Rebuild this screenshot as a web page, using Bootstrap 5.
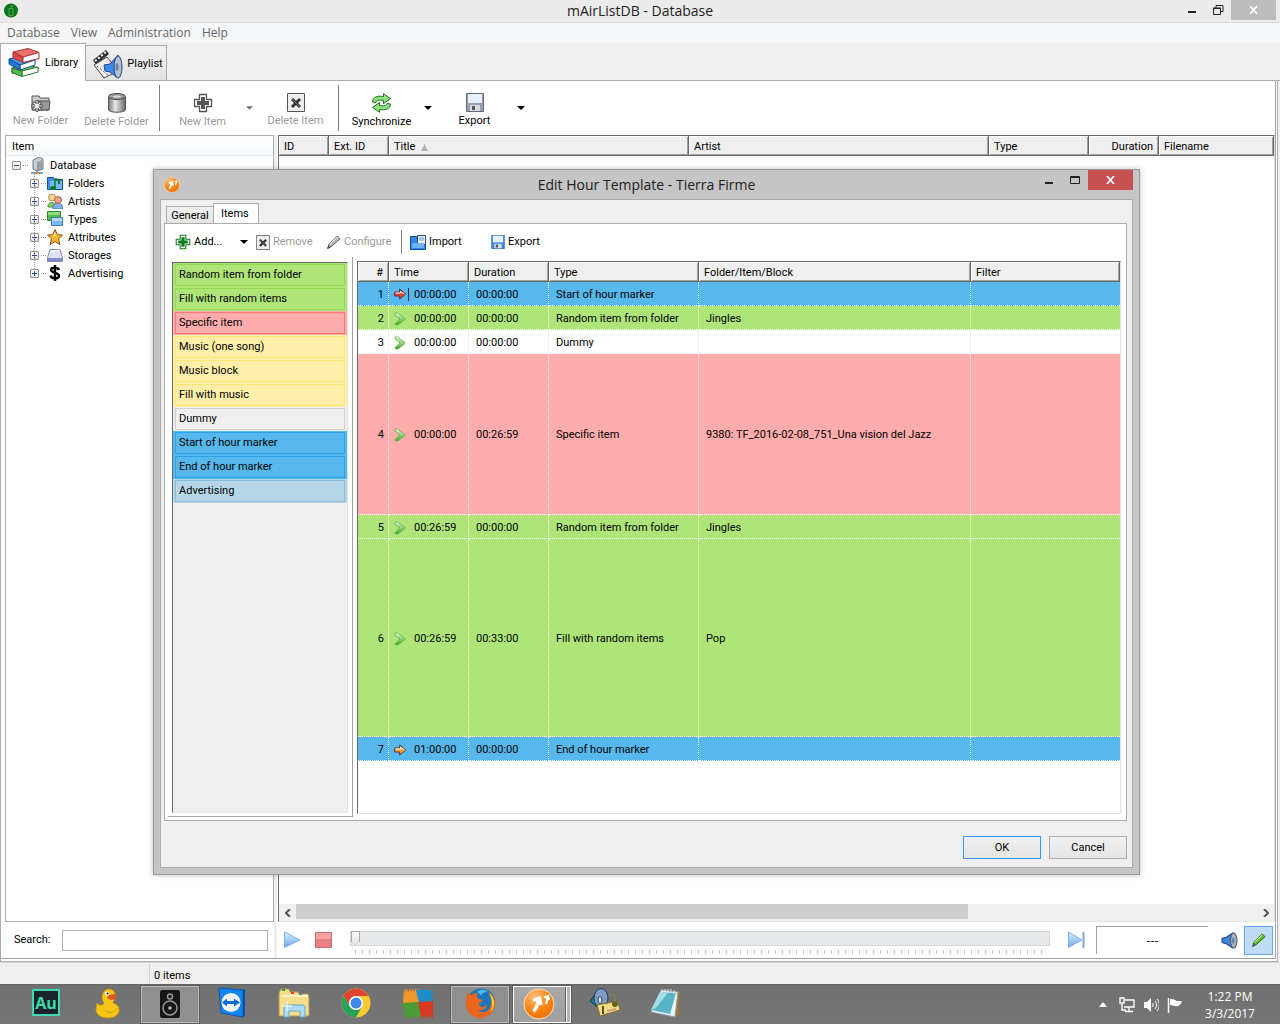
<!DOCTYPE html>
<html lang="en">
<head>
<meta charset="utf-8">
<meta name="viewport" content="width=device-width, initial-scale=1">
<title>mAirListDB - Database</title>
<link href="https://cdn.jsdelivr.net/npm/bootstrap@5.3.0/dist/css/bootstrap.min.css" rel="stylesheet">
<style>
  :root { --line:#acacac; --dark:#696969; --face:#efefef; }
  body { font:11px/14px Roboto,"Liberation Sans",sans-serif; color:#000; background:var(--face); }
  svg { display:block; flex:none; }
  button { font:inherit; color:inherit; }
  a { color:inherit; text-decoration:none; }
  .caption { display:grid; grid-template-columns:1fr auto 1fr; font:14px/22px "Open Sans","Noto Sans",sans-serif; color:#222; }
  .caption h1, .caption h2 { font:inherit; margin:0; }
  .app-caption { height:23px; background:#ebebeb; border-bottom:1px solid #d9dcdf; }
  .win-btn { border:0; background:none; padding:0; display:flex; align-items:center; justify-content:center; width:26px; height:20px; }
  .win-close { width:45px; background:#bcbcbc; color:#fff; }
  .menus { height:19px; background:#f5f6f7; font:12px/19px "Open Sans","Noto Sans",sans-serif; color:#666; padding-left:7px; gap:11px; }
  .page-tabs { height:39px; padding-top:2px; border-bottom:1px solid var(--line); align-items:flex-end; }
  .page-tab { border:1px solid var(--line); border-bottom:0; background:linear-gradient(#f1f1f1,#e3e3e3); height:35px; padding:2px 3px 0 6px; gap:4px; }
  .page-tab.on { background:#fff; height:38px; margin-bottom:-1px; padding:0 7px; gap:5px; }
  .page-tab + .page-tab { border-left:0; }
  .page-body { background:#fff; border:solid var(--line); border-width:0 1px 1px; margin-right:2px; padding:0 1px 2px 0; min-height:0; }
  .page-inner { border:solid #a0a0a0; border-width:0 1px 1px 0; }
  .bigbar { height:54px; padding-left:2px; gap:1px; }
  .big-tool { width:75px; height:44px; margin-top:8px; border:0; background:none; padding:4px 0 0; display:flex; flex-direction:column; align-items:center; gap:2px; }
  .drop { border:0; background:none; padding:0; width:16px; display:flex; justify-content:center; align-items:center; }
  .vline { width:1px; background:#808080; flex:none; }
  .bigbar .vline { margin:4px; }
  .off { color:#9a9a9a; }
  .gray svg { filter:grayscale(1); }
  .side { width:269px; margin-left:4px; border:1px solid var(--line); background:#fff; }
  .side-head { height:20px; line-height:22px; padding-left:6px; border-bottom:1px solid #e3ecf5; background:linear-gradient(#fff,#f7fafd); }
  .tree, .tree ul { list-style:none; margin:0; padding:0; }
  .tree .node { height:18px; line-height:18px; display:flex; align-items:center; }
  .tree .node b { font-weight:400; padding-top:1px; }
  .tree ul { position:relative; padding-left:20px; }
  .tree .kid::before { content:""; position:absolute; left:24px; top:0; bottom:9px; border-left:1px dotted #999; }
  .pm { width:9px; height:9px; border:1px solid #919191; border-radius:1px; position:relative; background:linear-gradient(#fff,#e4e4e4); color:#274a9c; }
  .pm svg { position:absolute; left:0; top:0; }
  .tree > li > .node > .pm { margin-left:2px; }
  .dots { width:5px; border-top:1px dotted #999; margin:0 1px 0 2px; }
  .node svg { margin-right:5px; }
  .splitter { width:3px; background:var(--face); margin:0 1px 0 0; flex:none; }
  .well { border:1px solid var(--dark); border-right-color:#e3e3e3; border-bottom-color:#e3e3e3; background:#fff; }
  .grid-tb { border-collapse:separate; border-spacing:0; table-layout:fixed; width:100%; }
  .grid-tb th { font-weight:400; height:20px; padding:2px 5px 0; line-height:17px; background:var(--face); white-space:nowrap;
    border:solid var(--dark); border-width:0 1px 1px 0; box-shadow:inset 1px 1px #fff, inset -1px -1px #a0a0a0; }
  .hscroll { height:17px; background:#f0f0f0; color:#555; }
  .hthumb { background:#cdcdcd; height:15px; width:672px; }
  .arrow-btn { width:17px; border:0; padding:0; background:none; display:flex; justify-content:center; align-items:center; }
  .footer-row { height:36px; }
  .search-lb { width:48px; flex:none; }
  .search-row { padding-left:13px; }
  .search-in { width:206px; height:21px; border:1px solid #abadb3; font:inherit; padding:0 4px; }
  .seek { -webkit-appearance:none; appearance:none; display:block; width:100%; height:15px; margin:0; background:#e7eaea; border:1px solid #d6d6d6; }
  .seek::-webkit-slider-thumb { -webkit-appearance:none; width:9px; height:15px; clip-path:polygon(0 0,100% 0,100% 75%,50% 100%,0 75%); border:1px solid #aaa; background:linear-gradient(#fafafa,#e0e0e0); }
  .ticks { height:4px; margin:4px 4px 0 5px; background:repeating-linear-gradient(90deg,#c4c4c4 0 1px,transparent 1px 7px); }
  .readout { width:112px; height:28px; border:solid #a0a0a0; border-width:1px 0 0 1px; text-align:center; line-height:28px; font-family:"DejaVu Sans",sans-serif; }
  .pen-btn { width:29px; height:29px; border:1px solid #66a7e8; background:#c0dcf5; padding:0; display:flex; align-items:center; justify-content:center; }
  .player { padding:0 2px 0 6px; }
  .btn-stop { margin:0 18px 0 14px; }
  .btn-next { margin:0 10px 0 18px; }
  .btn-vol { margin:0 6px 0 13px; }
  .status { height:22px; border-top:1px solid #d7d7d7; line-height:25px; }
  .status-l { width:150px; border-right:1px solid #d0d0d0; margin:1px 0; }

  .taskbar { height:40px; background:linear-gradient(#707070,#767676); border-top:1px solid #666; padding-left:17px; gap:4px; color:#fff; }
  .tsk { width:58px; height:37px; border:0; background:none; padding:0 0 2px; display:flex; align-items:center; justify-content:center; }
  .tsk.run { background:#8f8f8f; border:1px solid #bdbdbd; outline:1px solid #5c5c5c; outline-offset:0; margin-top:1px; }
  .tsk.cur { background:linear-gradient(#a8a8a8,#a0a0a0); border:1px solid #fff; box-shadow:inset -3px 0 #b2b2b2, inset -4px 0 #fff, inset -5px 0 #5c5c5c; padding-right:6px; }
  .clock { font:12px/17px "Open Sans","Noto Sans",sans-serif; width:78px; text-align:center; margin-right:11px; }
  .tray { gap:8px; }

  /* floating window */
  .dlg { position:absolute; left:153px; right:140px; top:169px; bottom:149px; background:#c5c5c5; border:1px solid #999; padding:0 6px 6px; box-shadow:0 0 6px rgba(0,0,0,.25); }
  .dlg .caption { height:29px; line-height:30px; }
  .dlg .win-close { background:#c75050; }
  .dlg-face { background:var(--face); border:1px solid var(--line); padding:3px 5px 8px 3px; }
  .small-tabs { height:20px; padding-left:2px; align-items:flex-end; }
  .small-tab { border:1px solid var(--line); border-bottom:0; height:17px; background:linear-gradient(#f1f1f1,#e5e5e5); padding:0 4px; line-height:17px; width:48px; white-space:nowrap; }
  .small-tab.on { background:#fff; height:21px; width:46px; margin:0 0 -1px -1px; padding:0 10px 0 7px; line-height:20px; }
  .dlg-page { background:#fff; border:1px solid var(--line); padding:6px 5px 3px 3px; }
  .smallbar { height:24px; padding-left:7px; }
  .sm-tool { border:0; background:none; padding:0; display:flex; align-items:center; gap:3px; }
  .palette-wrap { width:185px; flex:none; border:solid #a0a0a0; border-width:0 1px 1px 0; padding:5px 4px 3px 4px; margin-top:3px; }
  .palette-box { background:var(--face); }
  .table-well { margin:7px 0 3px 4px; }
  .kind { display:block; width:100%; height:24px; padding:1px 2px; border:0; text-align:left; background:var(--bg); white-space:nowrap; }
  .kind span { display:block; height:22px; line-height:20px; padding-left:3px; border:1px solid var(--bd); }
  .k-green { --bg:#afe578; --bd:#93d94e; } .k-red { --bg:#ffacac; --bd:#ff7676; } .k-yel { --bg:#ffefa8; --bd:#ffe477; }
  .k-gray { --bg:#efefef; --bd:#d0d0d0; } .k-blue { --bg:#56b8ec; --bd:#2aa4e8; } .k-pale { --bg:#b5d6e7; --bd:#86bfda; } .k-white { --bg:#fff; --bd:#eee; }
  .grid-tb td { height:24px; padding:2px 7px 0; line-height:20px; vertical-align:middle; background:var(--bg); border:dotted #fff; border-width:0 1px 1px 0; white-space:nowrap; }
  .grid-tb tr.k-white td { border-color:#e8e8e8; }
  .grid-tb td:last-child { border-right:0; }
  .grid-tb td:first-child { padding-right:4px; text-align:right; }
  .grid-tb td:nth-child(2) { padding:2px 0 0 5px; }
  .grid-tb .mark-ic { width:20px; }
  .grid-tb .tall-a td { height:161px; }
  .grid-tb .tall-b td { height:198px; }
  .push-row { padding-top:15px; gap:8px; }
  .push { width:78px; height:23px; border:1px solid var(--line); background:linear-gradient(#f0f0f0,#e5e5e5); padding:0; }
  .push.main-push { border-color:#3399ff; }
  .w-add { width:61px; } .w-rem { width:70px; } .w-conf { width:75px; } .w-imp { width:81px; }
</style>
<script src="https://cdn.jsdelivr.net/npm/bootstrap@5.3.0/dist/js/bootstrap.bundle.min.js"></script>
</head>
<body class="vh-100 d-flex flex-column overflow-hidden position-relative">
<svg width="0" height="0" class="position-absolute" aria-hidden="true">
  <defs>
    <radialGradient id="orb" cx=".35" cy=".25" r=".9"><stop offset="0" stop-color="#ffc07a"/><stop offset=".5" stop-color="#f98511"/><stop offset="1" stop-color="#e86c00"/></radialGradient>
    <linearGradient id="steel" x2="1"><stop offset="0" stop-color="#777"/><stop offset=".4" stop-color="#e8e8e8"/><stop offset="1" stop-color="#666"/></linearGradient>
    <linearGradient id="sky" x2="0" y2="1"><stop offset="0" stop-color="#e0f1ff"/><stop offset="1" stop-color="#67a9ec"/></linearGradient>
    <linearGradient id="grn" x2="0" y2="1"><stop offset="0" stop-color="#e4f8d6"/><stop offset=".5" stop-color="#8fd070"/><stop offset="1" stop-color="#41a51f"/></linearGradient>
  </defs>
  <symbol id="orange" viewBox="0 0 32 32"><circle cx="16" cy="16" r="15" fill="url(#orb)" stroke="#ffe3c4" stroke-width="1"/><path d="M10.500 23.500c2-2 4-6 4.500-11M10 12.500l6.500-2.500 1.500 7" fill="none" stroke="#fff" stroke-width="3.400"/><path d="M23 16c1-2 1.500-4 1.200-7M21 9.500l4-1.500 1 4" fill="none" stroke="#fff" stroke-width="2.200"/></symbol>
  <symbol id="plus" viewBox="0 0 20 20"><path d="M6.500 1.500h7v5h5v7h-5v5h-7v-5h-5v-7h5z" fill="#fff" stroke="currentColor" stroke-width="1.300" stroke-linejoin="round"/><path d="M8 4h4v4h4v4h-4v4H8v-4H4V8h4z" fill="currentColor"/></symbol>
  <symbol id="cross" viewBox="0 0 18 19"><path d="M.5.5h17v18H.5z" fill="#eee" stroke="#555"/><path d="M5 6l8 8M13 6l-8 8" stroke="#333" stroke-width="3"/><path d="M5 6l8 8" stroke="#777" stroke-width="1"/></symbol>
  <symbol id="tri" viewBox="0 0 8 4"><path d="M0 0h8L4 4z" fill="currentColor"/></symbol>
  <symbol id="disk" viewBox="0 0 18 19"><path d="M.5.5h17v18H.5z" fill="var(--disk,#9a9fb0)" stroke="var(--diskb,#646a7c)"/><path d="M2 1h14v9H2z" fill="#e6effb"/><path d="M4 12h10v6H4z" fill="#ddd"/><path d="M6 13h3v4H6z" fill="#556"/></symbol>
  <symbol id="horn" viewBox="0 0 16 16"><path d="M1 6l4-1 6-4v14l-6-4-4-1z" fill="#3f87e0" stroke="#1d478f"/><ellipse cx="12" cy="8" rx="3" ry="7" fill="#aeb3bd" stroke="#555a66"/><ellipse cx="11.500" cy="8" rx="1.200" ry="3" fill="#6787b8"/></symbol>
  <symbol id="pencil" viewBox="0 0 16 16"><path d="M2 14l1-4 9-9 3 3-9 8z" fill="var(--pen,#bbb)" stroke="var(--penb,#555)"/><path d="M4 10l8-8" stroke="#fff" stroke-width="1"/><path d="M1 15l1.500-4 2.500 2.500z" fill="#555"/></symbol>
  <symbol id="chev" viewBox="0 0 12 14"><path d="M1 1h2.500l7.500 5.500v1L4 13H1.500l-.5-1.500L6 7 1 3z" fill="url(#grn)" stroke="#67b04f" stroke-width=".8"/></symbol>
  <symbol id="arr" viewBox="0 0 13 12"><path d="M.7 4h5V1l6 5-6 5V8h-5z" fill="var(--ar)" stroke="#62302a"/><path d="M1.500 5h5V3.500l4 2.500" stroke="#fff" fill="none"/></symbol>
</svg>

<header class="caption app-caption">
  <div><svg width="15" height="20" viewBox="0 0 15 20" class="ms-1"><circle cx="7" cy="10.500" r="7" fill="#087814"/><path d="M5 8.500h4v7H5zM7 8.500V6h2.500" fill="none" stroke="#5f9f66"/></svg></div>
  <h1 class="pt-1 lh-1">mAirListDB - Database</h1>
  <div class="d-flex justify-content-end pe-1">
    <button class="win-btn" aria-label="Minimize"><svg width="8" height="10"><path d="M0 6h8v2H0z" fill="#222"/></svg></button>
    <button class="win-btn" aria-label="Restore"><svg width="11" height="10" viewBox="0 0 11 10"><path d="M.5 3.500h7v6h-7zM3 3V.5h7v6H8M0 3h8" fill="none" stroke="#222"/></svg></button>
    <button class="win-btn win-close" aria-label="Close"><svg width="9" height="8" viewBox="0 0 9 8"><path d="M1 0l7 8M8 0L1 8" stroke="#fff" stroke-width="1.700"/></svg></button>
  </div>
</header>
<nav class="menus d-flex"><a href="#">Database</a><a href="#">View</a><a href="#">Administration</a><a href="#">Help</a></nav>

<div class="page-tabs d-flex">
  <button class="page-tab on d-flex align-items-center">
    <svg width="32" height="29" viewBox="0 0 32 29"><path d="M4 20l14-4 13 4-17 7-10-2z" fill="#60b95a" stroke="#267a29"/><path d="M14 23l16-4v5l-16 4.500z" fill="#fff" stroke="#267a29"/><path d="M4 20v4.500l10 4V23z" fill="#55b750" stroke="#267a29"/><path d="M1 11l15-3 11 4-15 5z" fill="#4a9ce8" stroke="#15519a"/><path d="M12 17l15-5v5l-15 5z" fill="#fff" stroke="#15519a"/><path d="M1 11v5l11 6v-5z" fill="#2277cf" stroke="#15519a"/><path d="M5 4l15-3.500L31 4.500 15 9z" fill="#ec7272" stroke="#a33"/><path d="M5 4v6l10 4.500V9z" fill="#d94848" stroke="#a33"/><path d="M15 9l16-4.500v6l-16 4z" fill="#fff" stroke="#a33"/></svg>Library</button>
  <button class="page-tab d-flex align-items-center">
    <svg width="31" height="30" viewBox="0 0 31 30"><path d="M1 11L14 1l3 4L4 16z" fill="#333"/><path d="M3 12L15 2" stroke="#fff" stroke-width="2" stroke-dasharray="2 2"/><path d="M2 16l13-8 11 14-14 7z" fill="#eee" stroke="#444"/><path d="M5 17l12 10" stroke="#555" stroke-dasharray="2 2"/><path d="M12 16l6-1 8-9v23l-8-6-5-1z" fill="#3f8be6" stroke="#1d478f"/><ellipse cx="26" cy="18" rx="4" ry="11" fill="#b9bec8" stroke="#1d478f"/><ellipse cx="25" cy="18" rx="1.500" ry="4" fill="#6787b8"/></svg>Playlist</button>
</div>

<main class="page-body flex-fill d-flex flex-column">
 <div class="page-inner flex-fill d-flex flex-column">
  <div class="bigbar d-flex">
    <button class="big-tool off gray"><svg width="20" height="19" viewBox="0 0 20 19"><path d="M1 3h7l1 2h9v12H1z" fill="#ccc" stroke="#555"/><path d="M6 8h13l-1 9H5z" fill="#999" stroke="#555"/><path d="M6 7v12M0 13h12M2 9l8 8M10 9l-8 8" stroke="#333" stroke-width="2.600"/><path d="M6 7.500v11M.5 13h11M2.500 9.500l7 7M9.500 9.500l-7 7" stroke="#fff" stroke-width="1.200"/></svg>New Folder</button>
    <button class="big-tool off gray"><svg width="20" height="20" viewBox="0 0 20 20"><path d="M1.500 4v13c2 3 15 3 17 0V4z" fill="url(#steel)" stroke="#555"/><ellipse cx="10" cy="3.500" rx="8.500" ry="3" fill="#999" stroke="#444"/><ellipse cx="10" cy="3.500" rx="4" ry="1" fill="#ddd"/></svg>Delete Folder</button>
    <div class="vline"></div>
    <button class="big-tool off"><svg width="20" height="20" style="color:#555"><use href="#plus"/></svg>New Item</button>
    <button class="drop off" aria-label="New item options"><svg width="7" height="4" class="text-secondary"><use href="#tri"/></svg></button>
    <button class="big-tool off"><svg width="18" height="19"><use href="#cross"/></svg>Delete Item</button>
    <div class="vline"></div>
    <button class="big-tool"><svg width="21" height="20" viewBox="0 0 21 20"><path d="M1.500 9c0-5 5-6.500 11-5.500V.7l7 5-7 4.800V7.500c-4-.7-7-.5-7.500 2z" fill="#8fe37c" stroke="#1d6b24"/><path d="M19.500 11c0 5-5 6.500-11 5.500v2.800l-7-5 7-4.800v3c4 .7 7 .5 7.500-2z" fill="#8fe37c" stroke="#1d6b24"/></svg>Synchronize</button>
    <button class="drop" aria-label="Synchronize options"><svg width="8" height="4"><use href="#tri"/></svg></button>
    <button class="big-tool"><svg width="18" height="19"><use href="#disk"/></svg>Export</button>
    <button class="drop" aria-label="Export options"><svg width="8" height="4"><use href="#tri"/></svg></button>
  </div>

  <div class="d-flex flex-fill">
    <section class="d-flex flex-column flex-shrink-0">
      <div class="side flex-fill">
        <div class="side-head">Item</div>
        <ul class="tree ps-1">
          <li>
            <div class="node"><span class="pm"><svg width="7" height="7"><path d="M1 3.500h5" stroke="currentColor"/></svg></span><span class="dots"></span>
              <svg width="16" height="17" viewBox="0 0 16 17"><path d="M4 3l6-3 4 2v10l-6 2-4-2z" fill="#c9ced3" stroke="#70767c"/><path d="M8 5l5-2v9l-5 2z" fill="#9aa2a9"/><path d="M8 14v2M2 16h12" stroke="#4c86c8" stroke-width="1.600"/><path d="M6 15h4v2H6z" fill="#e58a2c"/></svg><b>Database</b></div>
            <ul id="kids"></ul>
          </li>
        </ul>
      </div>
      <div class="footer-row search-row d-flex align-items-center">
        <label for="q" class="search-lb">Search:</label>
        <input id="q" class="search-in" type="text">
      </div>
    </section>
    <div class="splitter"></div>
    <section class="flex-fill d-flex flex-column">
      <div class="well flex-fill d-flex flex-column">
        <table class="grid-tb">
          <colgroup><col style="width:50px"><col style="width:60px"><col style="width:300px"><col style="width:300px"><col style="width:100px"><col style="width:70px"><col></colgroup>
          <thead><tr><th>ID</th><th>Ext. ID</th><th>Title &nbsp;<svg class="d-inline-block" width="7" height="7"><path d="M3.500 0L7 7H0z" fill="#b5b5b5"/></svg></th><th>Artist</th><th>Type</th><th class="text-end">Duration</th><th>Filename</th></tr></thead>
        </table>
        <div class="hscroll d-flex mt-auto">
          <button class="arrow-btn" aria-label="Scroll left"><svg width="6" height="8"><path d="M5 0L1 4l4 4" fill="none" stroke="#555" stroke-width="2"/></svg></button>
          <div class="hthumb"></div>
          <button class="arrow-btn ms-auto" aria-label="Scroll right"><svg width="6" height="8"><path d="M1 0l4 4-4 4" fill="none" stroke="#555" stroke-width="2"/></svg></button>
        </div>
      </div>
      <div class="footer-row player d-flex align-items-center">
        <button class="sm-tool" aria-label="Play"><svg width="17" height="18"><path d="M.5 1v15.500L16 9z" fill="url(#sky)" stroke="#83aee6"/></svg></button>
        <button class="sm-tool btn-stop" aria-label="Stop"><svg width="17" height="16"><path d="M.5.5h16v15H.5z" fill="#ea7f7f" stroke="#c96f77"/><path d="M1 1h15v6H1z" fill="#f5a1a1"/></svg></button>
        <div class="flex-fill pt-1"><input class="seek" type="range" value="0" aria-label="Position"><div class="ticks"></div></div>
        <button class="sm-tool btn-next" aria-label="Next"><svg width="18" height="18"><path d="M.5 1v15.500L14 9z" fill="url(#sky)" stroke="#83aee6"/><path d="M15.500 1v16" stroke="#7fa5dc" stroke-width="2"/></svg></button>
        <div class="readout">---</div>
        <button class="sm-tool btn-vol" aria-label="Volume"><svg width="17" height="17"><use href="#horn"/></svg></button>
        <button class="pen-btn" aria-label="Edit" style="--pen:#55c31f;--penb:#1f6a0d"><svg width="15" height="15"><use href="#pencil"/></svg></button>
      </div>
    </section>
  </div>
 </div>
</main>

<div class="status d-flex"><div class="status-l"></div><div class="ps-1">0 items</div></div>

<footer class="taskbar d-flex">
  <button class="tsk" aria-label="Audition"><svg width="28" height="28" viewBox="0 0 28 28"><path d="M1 1h26v25H1z" fill="#17252a" stroke="#3edbb0" stroke-width="2"/><text x="14" y="20" text-anchor="middle" font-family="Open Sans" font-weight="700" font-size="16" fill="#3edbb0">Au</text></svg></button>
  <button class="tsk" aria-label="Duck"><svg width="26" height="32" viewBox="0 0 26 32"><path d="M2 16c2 2 4 3 7 1 0-2-2-3-2-6 0-6 3-9 7-9s7 3 6 8c0 3-2 4-2 6 4 1 7 4 6 8-1 5-6 7-12 7S0 27 1 22z" fill="#f5c518" stroke="#c08d05" stroke-width=".8"/><path d="M10 23c3 4 9 3 12-2" fill="none" stroke="#d39c07"/><path d="M14 8l6-1 1 5-5 1-4-2z" fill="#e2561b"/><circle cx="12" cy="6.500" r="2" fill="#fff"/><circle cx="12.500" cy="6.500" r="1"/></svg></button>
  <button class="tsk run" aria-label="Player"><svg width="20" height="28" viewBox="0 0 20 28"><rect width="20" height="28" rx="2" fill="#161616"/><circle cx="10" cy="6.500" r="2.500" fill="none" stroke="#999" stroke-width="1.500"/><circle cx="10" cy="18" r="7" fill="none" stroke="#999" stroke-width="1.500"/><circle cx="10" cy="18" r="1.800" fill="#bbb"/></svg></button>
  <button class="tsk" aria-label="Remote"><svg width="28" height="31" viewBox="0 0 28 31"><path d="M1 1l24 2v27L3 26z" fill="#1185f2" stroke="#0859b8"/><path d="M25 3l2-1v26l-2 2z" fill="#0650a8"/><circle cx="13" cy="15.500" r="9.500" fill="#f2f6fb"/><path d="M4 15.500l5-4v2.500h7v-2.500l6 4-6 4V17H9v2.500z" fill="#0b6cd4"/></svg></button>
  <button class="tsk" aria-label="Files"><svg width="33" height="30" viewBox="0 0 33 30"><path d="M1 5l2-4h8l1 3h8l1 2h9l1 4v18H1z" fill="#f6df8c" stroke="#b9964a"/><path d="M4 1h3v2H4z" fill="#2ca52c"/><path d="M13 4h3v2h-3z" fill="#dd4b2b"/><path d="M21 6h3v2h-3z" fill="#2b7fdd"/><path d="M3 8h27" stroke="#fff4c4" stroke-width="2"/><path d="M6 29V20c0-2 1-3 3-3h15c2 0 3 1 3 3v9h-5v-6H11v6z" fill="#a9dbf3" stroke="#5ea8cc"/><path d="M9 13v10M4 18h10" stroke="#fff"/></svg></button>
  <button class="tsk" aria-label="Chrome"><svg width="30" height="30" viewBox="0 0 30 30"><circle cx="15" cy="15" r="14.500" fill="#fbc931"/><path d="M2.500 7.700A14.500 14.500 0 0127.600 8H15a7 7 0 00-6 10.500z" fill="#de4433"/><path d="M2.500 7.700A14.500 14.500 0 0015 29.500L21 18.500A7 7 0 019 18.500z" fill="#25a35a"/><circle cx="15" cy="15" r="7" fill="#fff"/><circle cx="15" cy="15" r="5.500" fill="#3f86ee"/></svg></button>
  <button class="tsk" aria-label="Antivirus"><svg width="32" height="32" viewBox="0 0 32 32"><path d="M2 1l1 4 2-4 1 4 2-4 1 4 2-4 1 4 2-4 1 4 2-4v15H1z" fill="#f0982a"/><path d="M14 3h18l-4 2 4 1-4 2 4 1-4 2 4 1-1 3-14 1z" fill="#1b8ec9"/><path d="M16 15l15-1v18l-2-4-1 4-2-4-1 4-2-4-1 4-2-4-1 4-2-4z" fill="#d8381f"/><path d="M0 16l16-1 3 15-19 1 4-2-4-2 4-2-4-2 4-2-4-2z" fill="#4a9c34"/></svg></button>
  <button class="tsk run" aria-label="Firefox"><svg width="31" height="31" viewBox="0 0 31 31"><circle cx="16" cy="14.500" r="14" fill="#1a77bd"/><path d="M12 4c3-3 8-3 11 0-4 0-7 1-6 4z" fill="#4cb9e8"/><path d="M2 4l4 3c2-2 5-2 7-1-2 2-1 4 1 5l4 1-3 3c-2 1-1 4 3 4l4-2c0 4-6 6-9 5 5 5 12 1 13-6 1-5-1-9-3-12 6 3 8 9 7 14-2 8-8 12-15 12C6 30 0 23 1 13c0-3 1-5 1-9z" fill="#e8651d"/><path d="M24 5c6 4 7 14 1 20 3-6 3-13-1-20z" fill="#fddb35"/></svg></button>
  <button class="tsk run cur" aria-label="mAirList"><svg width="32" height="32"><use href="#orange"/></svg></button>
  <button class="tsk" aria-label="Tagger"><svg width="31" height="29" viewBox="0 0 31 29"><path d="M1 13l7-9v15z" fill="#14838c" stroke="#0b3b45"/><ellipse cx="12" cy="10" rx="7" ry="9.500" fill="#7f9cc4" stroke="#243650"/><ellipse cx="11" cy="12" rx="2" ry="3.500" fill="#dde7f5" stroke="#243650"/><path d="M8 17l21-4 2 9-20 6z" fill="#efdf82" stroke="#7c6a23"/><path d="M14 25v-7M13 25h2" stroke="#222" stroke-width="1.500"/><path d="M18 23l9-2" stroke="#c88" stroke-width="1.500"/><circle cx="26" cy="16" r="3" fill="#655d2c"/><path d="M20 7h6v7" fill="none" stroke="#8d8844"/></svg></button>
  <button class="tsk" aria-label="Notepad"><svg width="32" height="30" viewBox="0 0 32 30"><path d="M27 3l3 1-1 22-4 3z" fill="#9c7434"/><path d="M11 2l17 2-3 25L1 24z" fill="#e8f4f6" stroke="#89a"/><path d="M10 4l16 1-6 21L1 22z" fill="#57b4c4"/><path d="M10 4l8 .5L6 20l-5 2z" fill="#a5dce4"/><path d="M12 1v4M15 1v4M18 1v4M21 1v4M24 2v4" stroke="#ddd"/></svg></button>
  <div class="tray d-flex align-items-center ms-auto">
    <svg width="8" height="5" class="me-1"><path d="M4 0l4 5H0z" fill="#fff"/></svg>
    <svg width="16" height="16" viewBox="0 0 16 16"><path d="M6 3h9v7H5M10 10v4M6 14.500h8M3 7v6h4M1 1h4v5H1z" fill="none" stroke="#fff" stroke-width="1.400"/></svg>
    <svg width="16" height="16" viewBox="0 0 16 16"><path d="M1 5h3l4-4v14l-4-4H1z" fill="#fff"/><path d="M10 6v4M12 4c2 2 2 6 0 8M14 2c3 3 3 9 0 12" fill="none" stroke="#fff"/></svg>
    <svg width="16" height="16" viewBox="0 0 16 16"><path d="M1.500 1v15" stroke="#fff" stroke-width="1.500"/><path d="M3 2c3-1 4 1 7 2h5c-1 4-4 6-7 5l-5-1z" fill="#fff"/></svg>
    <div class="clock">1:22 PM<br>3/3/2017</div>
  </div>
</footer>

<section class="dlg d-flex flex-column" role="dialog" aria-labelledby="dt">
  <div class="caption">
    <div class="d-flex align-items-center ps-1"><svg width="16" height="16"><use href="#orange"/></svg></div>
    <h2 id="dt">Edit Hour Template - Tierra Firme</h2>
    <div class="d-flex justify-content-end">
      <button class="win-btn" aria-label="Minimize"><svg width="8" height="10"><path d="M0 7h8v2H0z" fill="#222"/></svg></button>
      <button class="win-btn" aria-label="Maximize"><svg width="10" height="8" viewBox="0 0 10 8"><path d="M.5.5h9v7h-9zM0 1.500h10" fill="none" stroke="#222"/></svg></button>
      <button class="win-btn win-close" aria-label="Close"><svg width="9" height="8" viewBox="0 0 9 8"><path d="M1 0l7 8M8 0L1 8" stroke="#fff" stroke-width="1.700"/></svg></button>
    </div>
  </div>
  <div class="dlg-face flex-fill d-flex flex-column">
    <div class="small-tabs d-flex"><button class="small-tab">General</button><button class="small-tab on">Items</button></div>
    <div class="dlg-page flex-fill d-flex flex-column">
      <div class="smallbar d-flex">
        <button class="sm-tool w-add"><svg width="16" height="16" style="color:#0b7d1a"><use href="#plus"/></svg>Add...</button>
        <button class="drop me-1" aria-label="Add options"><svg width="8" height="4"><use href="#tri"/></svg></button>
        <button class="sm-tool off w-rem"><svg width="14" height="15"><use href="#cross"/></svg>Remove</button>
        <button class="sm-tool off w-conf"><svg width="15" height="15"><use href="#pencil"/></svg>Configure</button>
        <div class="vline"></div>
        <button class="sm-tool ms-2 w-imp"><svg width="16" height="15" viewBox="0 0 16 15"><path d="M.5 1.500h6l1 2h8v11H.5z" fill="#2f86e4" stroke="#144f9e"/><path d="M7.500.5h8v9h-8z" fill="#eaf3ff" stroke="#345"/><path d="M9 3h5M9 5h5" stroke="#59c"/><path d="M2 8h12v5H2z" fill="#6db3f5"/></svg>Import</button>
        <button class="sm-tool" style="--disk:#3f8be8;--diskb:#1958ad"><svg width="14" height="14"><use href="#disk"/></svg>Export</button>
      </div>
      <div class="d-flex flex-fill">
        <div class="palette-wrap d-flex">
          <div class="well palette-box flex-fill" id="kinds"></div>
        </div>
        <div class="well table-well flex-fill">
          <table class="grid-tb">
            <colgroup><col style="width:31px"><col style="width:80px"><col style="width:80px"><col style="width:150px"><col style="width:272px"><col></colgroup>
            <thead><tr><th class="text-end">#</th><th>Time</th><th>Duration</th><th>Type</th><th>Folder/Item/Block</th><th>Filter</th></tr></thead>
            <tbody id="rows"></tbody>
          </table>
        </div>
      </div>
    </div>
    <div class="push-row d-flex justify-content-end"><button class="push main-push">OK</button><button class="push">Cancel</button></div>
  </div>
</section>

<script>
  const art = {
    Folders:'<path d="M.5 2.500h6l1 2h8v10H.5z" fill="#3f8be8" stroke="#144f9e"/><path d="M3 6h12v8H3z" fill="#7ab8f5"/><path d="M8 4l4 1v4" fill="none" stroke="#0a7a1c" stroke-width="2"/><ellipse cx="6" cy="13" rx="3" ry="2" fill="#0a7a1c"/><path d="M8 4v9" stroke="#0a7a1c" stroke-width="1.500"/>',
    Artists:'<path d="M1 14c-1-6 8-6 8 0z" fill="#7fcb62" stroke="#4a9431"/><circle cx="5" cy="4.500" r="3.500" fill="#f2d08d" stroke="#b98c43"/><path d="M6 16c-1-8 10-8 9.500 0z" fill="#7fb2ee" stroke="#3f70b5"/><circle cx="11" cy="7" r="3.500" fill="#f1a18b" stroke="#b05e4c"/>',
    Types:'<path d="M.5.5h13v9H.5z" fill="#54b948" stroke="#2c8425"/><path d="M1 1h12v3H1z" fill="#93dc86"/><path d="M4.500 6.500h11v8h-11z" fill="#7ab8f5" stroke="#3c78c3"/><path d="M5 7h10v3H5z" fill="#b7dafb"/>',
    Attributes:'<path d="M8 .5l2.300 5.200 5.200.4-4 3.700 1.400 5.700L8 12.500l-4.900 3 1.400-5.700-4-3.700 5.200-.4z" fill="#fdb92f" stroke="#8a4a12"/><path d="M8 3l1 4H6z" fill="#ffeaa0"/>',
    Storages:'<path d="M3 2.500h10l2.500 8v4H.5v-4z" fill="#dde2f4" stroke="#8088a5"/><path d="M1 11h14v3H1z" fill="#7e8bd0"/><path d="M3 5l9-2" stroke="#fff"/>',
    Advertising:'<path d="M12 5c-1-3-8-3-8 0s8 2.500 8 6-8 3-8.500-.5M8 0v16" fill="none" stroke="#000" stroke-width="2.400"/>'
  };
  document.getElementById('kids').innerHTML = Object.keys(art).map(n =>
    `<li class="kid"><div class="node"><span class="pm"><svg width="7" height="7"><path d="M1 3.500h5M3.500 1v5" stroke="currentColor"/></svg></span><span class="dots"></span><svg width="16" height="16" viewBox="0 0 16 16">${art[n]}</svg><b>${n}</b></div></li>`).join('');

  document.getElementById('kinds').innerHTML = [
    ['green','Random item from folder'],['green','Fill with random items'],['red','Specific item'],['yel','Music (one song)'],['yel','Music block'],
    ['yel','Fill with music'],['gray','Dummy'],['blue','Start of hour marker'],['blue','End of hour marker'],['pale','Advertising']
  ].map(k => `<button class="kind k-${k[0]}"><span>${k[1]}</span></button>`).join('');

  const chev = '<svg width="12" height="14"><use href="#chev"/></svg>';
  const start = '<svg width="15" height="13" viewBox="0 0 15 13" style="--ar:#e0453c"><use href="#arr" width="13" height="12"/><path d="M14.500 0v13" stroke="#333"/></svg>';
  const end = '<svg width="13" height="12" style="--ar:#f2a03a"><use href="#arr"/></svg>';
  document.getElementById('rows').innerHTML = [
    ['blue',start,'00:00:00','00:00:00','Start of hour marker',''],
    ['green',chev,'00:00:00','00:00:00','Random item from folder','Jingles'],
    ['white',chev,'00:00:00','00:00:00','Dummy',''],
    ['red tall-a',chev,'00:00:00','00:26:59','Specific item','9380: TF_2016-02-08_751_Una vision del Jazz'],
    ['green',chev,'00:26:59','00:00:00','Random item from folder','Jingles'],
    ['green tall-b',chev,'00:26:59','00:33:00','Fill with random items','Pop'],
    ['blue',end,'01:00:00','00:00:00','End of hour marker','']
  ].map((r,i) => `<tr class="k-${r[0]}"><td>${i+1}</td><td><div class="d-flex align-items-center"><span class="mark-ic">${r[1]}</span>${r[2]}</div></td><td>${r[3]}</td><td>${r[4]}</td><td>${r[5]}</td><td></td></tr>`).join('');
</script>
</body>
</html>
